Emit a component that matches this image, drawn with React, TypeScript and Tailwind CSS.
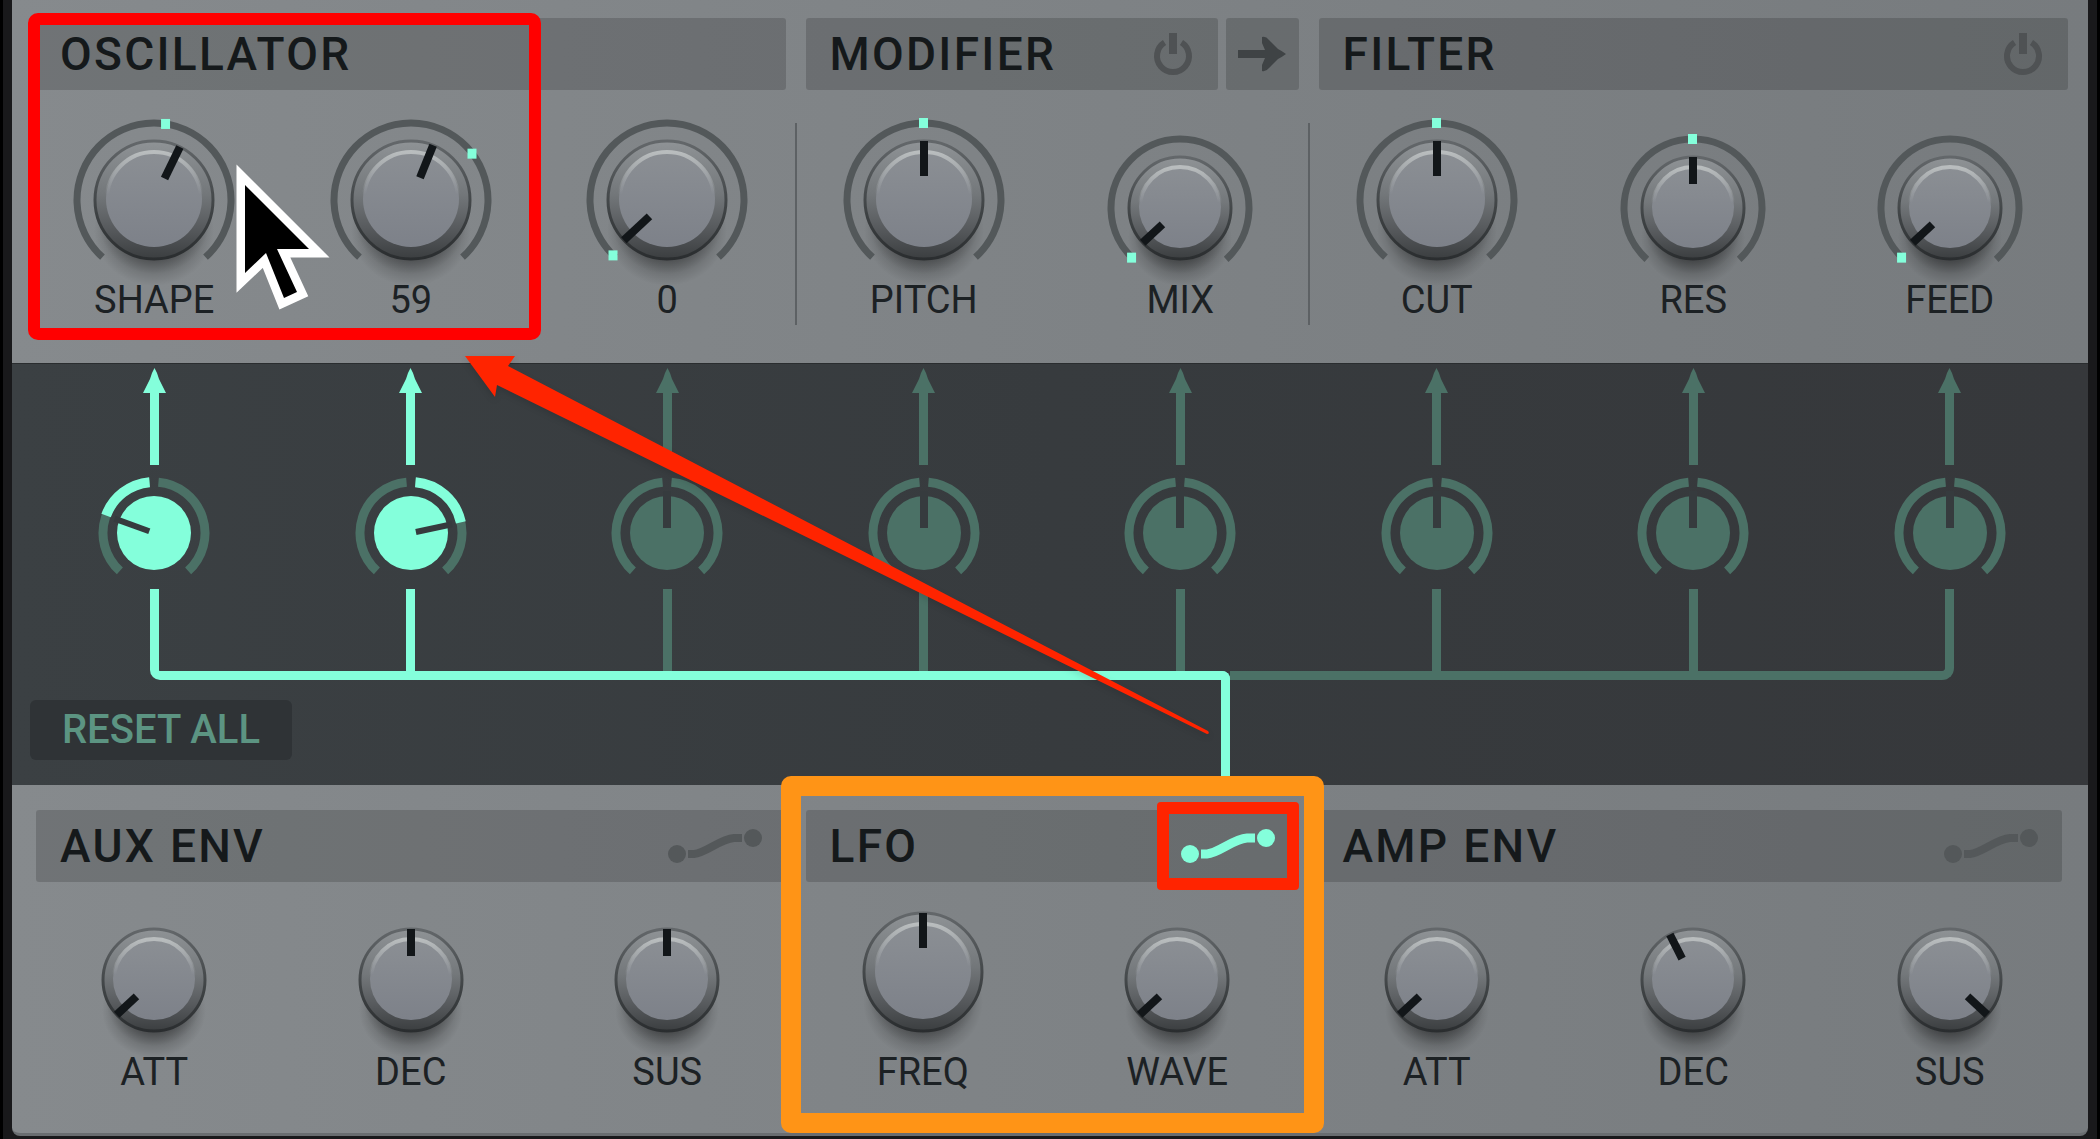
import { useState } from "react";
import type { ReactNode } from "react";
import clsx from "clsx";

const oscillatorKnobs = [
  { id: "osc-shape", label: "SHAPE", angle: 26, marker: 9, size: "lg" },
  { id: "osc-param", label: "59", angle: 22, marker: 53, size: "lg" },
  { id: "osc-mod", label: "0", angle: -133, marker: -136, size: "lg" },
];

const modifierKnobs = [
  { id: "mod-pitch", label: "PITCH", angle: 0, marker: 0, size: "lg" },
  { id: "mod-mix", label: "MIX", angle: -133, marker: -136, size: "sm" },
];

const filterKnobs = [
  { id: "filter-cut", label: "CUT", angle: 0, marker: 0, size: "lg" },
  { id: "filter-res", label: "RES", angle: 0, marker: 0, size: "sm" },
  { id: "filter-feed", label: "FEED", angle: -133, marker: -136, size: "sm" },
];

const auxKnobs = [
  { id: "aux-att", label: "ATT", angle: -133, size: "sm" },
  { id: "aux-dec", label: "DEC", angle: 0, size: "sm" },
  { id: "aux-sus", label: "SUS", angle: 0, size: "sm" },
];

const lfoKnobs = [
  { id: "lfo-freq", label: "FREQ", angle: 0, size: "lg" },
  { id: "lfo-wave", label: "WAVE", angle: -133, size: "sm" },
];

const ampKnobs = [
  { id: "amp-att", label: "ATT", angle: -133, size: "sm" },
  { id: "amp-dec", label: "DEC", angle: -27, size: "sm" },
  { id: "amp-sus", label: "SUS", angle: 133, size: "sm" },
];

const initialRoutes = [
  { name: "Shape amount", angle: -70 },
  { name: "Param amount", angle: 78 },
  { name: "Osc mod amount", angle: 0 },
  { name: "Pitch amount", angle: 0 },
  { name: "Mix amount", angle: 0 },
  { name: "Cutoff amount", angle: 0 },
  { name: "Resonance amount", angle: 0 },
  { name: "Feedback amount", angle: 0 },
];

type KnobData = { id: string; label: string; angle: number; marker?: number; size: string };

// angle is measured clockwise from twelve o'clock
const point = (cx: number, cy: number, r: number, angle: number) => {
  const rad = (angle * Math.PI) / 180;
  return { x: cx + r * Math.sin(rad), y: cy - r * Math.cos(rad) };
};

const arc = (cx: number, cy: number, r: number, from: number, to: number) => {
  const a = point(cx, cy, r, from);
  const b = point(cx, cy, r, to);
  return `M${a.x} ${a.y} A${r} ${r} 0 ${to - from > 180 ? 1 : 0} 1 ${b.x} ${b.y}`;
};

const Knob = ({ id, label, angle, marker, size }: KnobData) => {
  const [value, setValue] = useState(angle);
  const big = size === "lg";
  const cy = big ? 88 : 96;
  const r = big ? 60 : 52;
  const face = big ? 48 : 41;
  const ring = big ? 77 : 69;
  const dot = marker === undefined ? null : point(88, cy, ring, marker + value - angle);

  return (
    <div className="flex flex-col items-center">
      <div className="relative h-[168px] w-[176px]">
        <svg viewBox="0 0 176 168" className="h-full w-full overflow-visible" aria-hidden="true">
          <ellipse cx="88" cy={cy + 20} rx={r - 4} ry={r - 6} fill="url(#knobShadow)" />
          <ellipse cx="88" cy={cy + 30} rx={r} ry={r - 4} fill="url(#knobShadow)" />
          {dot && <path d={arc(88, cy, ring, -138, 138)} fill="none" stroke="#53585a" strokeWidth="7" />}
          <circle cx="88" cy={cy} r={r - 1} fill="url(#knobRim)" stroke="url(#knobEdge)" strokeWidth="3" />
          <circle cx="88" cy={cy - 1} r={face} fill="url(#knobFace)" />
          <circle cx="88" cy={cy - 1} r={face - 1} fill="none" stroke="url(#knobShine)" strokeWidth="4" />
          <rect
            x="84"
            y={cy - r + 1}
            width="8"
            height={r - 25}
            fill="#121619"
            transform={`rotate(${value} 88 ${cy})`}
          />
          {dot && <rect x={dot.x - 5} y={dot.y - 5} width="9" height="10" fill="#84ffdb" />}
        </svg>
        <input
          id={id}
          type="range"
          min={-138}
          max={138}
          value={value}
          onChange={(e) => setValue(Number(e.target.value))}
          className="absolute inset-0 h-full w-full cursor-pointer opacity-0"
        />
      </div>
      <label htmlFor={id} className="text-[38px] leading-10 text-[#1c2124]">
        {label}
      </label>
    </div>
  );
};

const KnobRow = ({ knobs, className }: { knobs: KnobData[]; className?: string }) => (
  <div className={clsx("grid", knobs.length === 3 ? "grid-cols-3" : "grid-cols-2", className)}>
    {knobs.map((knob) => (
      <Knob key={knob.id} {...knob} />
    ))}
  </div>
);

const HeaderBar = ({ title, children }: { title: string; children?: ReactNode }) => (
  <div className="flex h-[72px] flex-1 items-center justify-between rounded-[3px] bg-black/16 px-6">
    <h2 className="text-[46px] leading-none font-medium tracking-wider text-[#15191b]">{title}</h2>
    {children}
  </div>
);

const PowerButton = ({ label }: { label: string }) => (
  <button type="button" aria-label={label} className="text-[#4f5254]">
    <svg width="42" height="42" viewBox="0 0 42 42" fill="none" stroke="currentColor" className="block">
      <path d={arc(21, 23, 16, 32, 328)} strokeWidth="6" />
      <path d="M21 0V21" strokeWidth="8" />
    </svg>
  </button>
);

const EnvelopeButton = ({ label, active }: { label: string; active?: boolean }) => (
  <button
    type="button"
    aria-label={label}
    aria-pressed={!!active}
    className={active ? "text-[#84ffdb]" : "text-[#54585a]"}
  >
    <svg width="94" height="34" viewBox="0 0 94 34" className="block">
      <circle cx="9" cy="25" r="9" fill="currentColor" />
      <circle cx="85" cy="9" r="9" fill="currentColor" />
      <path d="M20 25H26C38 24 52 10 66 9H74" fill="none" stroke="currentColor" strokeWidth={active ? 9 : 8} />
    </svg>
  </button>
);

const Route = ({ name, angle, corner }: { name: string; angle: number; corner: boolean }) => {
  const [value, setValue] = useState(angle);
  const lit = value !== 0;
  const color = lit ? "#84ffdb" : "#4b7166";

  return (
    <div className="flex flex-col items-center">
      <svg width="25" height="97" viewBox="0 0 25 97" fill={color} className="block" aria-hidden="true">
        <path d="M12.500 0 Q15 4 17 11 L24 25 H17 V97 H8 V25 H1 L8 11 Q10 4 12.500 0Z" />
      </svg>
      <div className="relative mt-1 h-[120px] w-[120px]">
        <svg viewBox="0 0 120 120" className="h-full w-full" aria-hidden="true">
          <path d={arc(60, 64, 51, -138, -5)} fill="none" stroke="#4b7166" strokeWidth="9" />
          <path d={arc(60, 64, 51, 5, 138)} fill="none" stroke="#4b7166" strokeWidth="9" />
          {lit && (
            <path
              d={value > 0 ? arc(60, 64, 51, 5, value) : arc(60, 64, 51, value, -5)}
              fill="none"
              stroke={color}
              strokeWidth="10"
            />
          )}
          <circle cx="60" cy="64" r="37" fill={color} />
          <rect
            x={lit ? 57 : 56}
            y="22"
            width={lit ? 6 : 8}
            height="37"
            fill="#363b3e"
            transform={`rotate(${value} 60 64)`}
          />
        </svg>
        <input
          type="range"
          aria-label={name}
          min={-138}
          max={138}
          value={value}
          onChange={(e) => setValue(Number(e.target.value))}
          className="absolute inset-0 h-full w-full cursor-pointer opacity-0"
        />
      </div>
      <div className={clsx("w-[9px]", corner ? "h-[75px]" : "h-[83px]", lit ? "bg-[#84ffdb]" : "bg-[#4b7166]")} />
    </div>
  );
};

const Cursor = () => (
  <svg
    width="100"
    height="160"
    viewBox="230 160 100 160"
    className="pointer-events-none absolute top-[158px] left-[26.5%] overflow-visible"
    aria-hidden="true"
  >
    <path
      d="M245 187V275L266 255L284 300L297 294L277 251H309Z"
      fill="#000"
      stroke="#fff"
      strokeWidth="17"
      strokeMiterlimit="8"
      paintOrder="stroke"
    />
  </svg>
);

const ArrowCallout = () => (
  <svg
    width="750"
    height="384"
    viewBox="0 0 750 384"
    className="pointer-events-none absolute -top-2 left-[21.8%] overflow-visible drop-shadow-md"
    aria-hidden="true"
  >
    <path d="M0 0H50L43 10L743 375Q745 378 742 378L32 29L30 41Z" fill="#ff2400" />
  </svg>
);

// Shared paint for every knob
const KnobPaint = () => (
  <svg className="absolute h-0 w-0" aria-hidden="true">
    <defs>
      <linearGradient id="knobRim" x1="0" y1="0" x2="0" y2="1">
        <stop offset="0" stopColor="#8f9396" />
        <stop offset="0.450" stopColor="#73777a" />
        <stop offset="0.750" stopColor="#56595c" />
        <stop offset="1" stopColor="#3b3e40" />
      </linearGradient>
      <linearGradient id="knobEdge" x1="0" y1="0" x2="0" y2="1">
        <stop offset="0" stopColor="#63676a" />
        <stop offset="0.500" stopColor="#44484a" />
        <stop offset="1" stopColor="#2a2d2f" />
      </linearGradient>
      <linearGradient id="knobFace" x1="0" y1="0" x2="0" y2="1">
        <stop offset="0" stopColor="#8b8f94" />
        <stop offset="1" stopColor="#7d8189" />
      </linearGradient>
      <linearGradient id="knobShine" x1="0" y1="0" x2="0" y2="1">
        <stop offset="0" stopColor="#b9bdbe" />
        <stop offset="0.450" stopColor="#b9bdbe" stopOpacity="0" />
      </linearGradient>
      <radialGradient id="knobShadow">
        <stop offset="0.500" stopColor="#000" stopOpacity="0.300" />
        <stop offset="1" stopColor="#000" stopOpacity="0" />
      </radialGradient>
    </defs>
  </svg>
);

export default function App() {
  return (
    <main className="min-h-screen overflow-hidden border-x-3 border-black bg-[#19191b] pr-[9px] pl-[9px] font-[Roboto,'Liberation_Sans',sans-serif]">
      <KnobPaint />

      <div className="grid grid-cols-8 bg-linear-to-r from-[#868a8d] to-[#777b7e] pt-[18px] pr-2.5 pb-[43px] pl-3.5">
        <section className="relative col-span-3">
          <div className="mx-2.5 flex">
            <HeaderBar title="OSCILLATOR" />
          </div>
          <KnobRow knobs={oscillatorKnobs} className="mt-[22px]" />
          <div className="pointer-events-none absolute -top-[5px] left-0.5 h-[327px] w-2/3 rounded-[10px] border-12 border-[#ff0000]" />
          <div className="pointer-events-none absolute inset-x-0 -top-[18px]">
            <Cursor />
          </div>
        </section>

        <section className="relative col-span-2">
          <div className="mx-2.5 flex gap-2">
            <HeaderBar title="MODIFIER">
              <PowerButton label="Modifier on" />
            </HeaderBar>
            <button
              type="button"
              aria-label="Next modifier"
              className="flex w-[73px] items-center justify-center rounded-[3px] bg-black/16 text-[#3f4345]"
            >
              <svg width="48" height="36" viewBox="0 0 48 36" fill="currentColor">
                <path d="M0 14H27L24 7V1Q28 0 31 4L40 13Q44 15 48 18Q44 21 40 23L31 32Q28 36 24 35V29L27 22H0Z" />
              </svg>
            </button>
          </div>
          <KnobRow knobs={modifierKnobs} className="mt-[22px]" />
          <div className="absolute top-[105px] -left-px h-[202px] w-0.5 bg-[#5d6164]" />
          <div className="absolute top-[105px] -right-px h-[202px] w-0.5 bg-[#5d6164]" />
        </section>

        <section className="col-span-3">
          <div className="mx-2.5 flex">
            <HeaderBar title="FILTER">
              <PowerButton label="Filter on" />
            </HeaderBar>
          </div>
          <KnobRow knobs={filterKnobs} className="mt-[22px]" />
        </section>
      </div>

      <section className="relative border-t border-[#2a2d2f] bg-linear-to-r from-[#3b4043] via-[#373b3e] to-[#36383b] pt-1 pr-2.5 pl-3.5">
        <div className="grid grid-cols-8">
          {initialRoutes.map((route, i) => (
            <Route key={route.name} {...route} corner={i === 0 || i === initialRoutes.length - 1} />
          ))}
        </div>
        {/* bus that carries the LFO to every destination */}
        <div className="-mt-[10px] flex items-start">
          <div className="w-[57%]">
            <div className="ml-[calc(10.965%-4px)] h-[18px] rounded-bl-[10px] border-b-9 border-l-9 border-[#84ffdb]" />
            <button
              type="button"
              className="mt-5 ml-1 h-[60px] w-[262px] rounded-md bg-[#2f3336] text-[40px] leading-none font-medium text-[#5c9482]"
            >
              RESET ALL
            </button>
          </div>
          <div className="mt-[9px] h-[114px] w-[34px] rounded-tr-lg border-t-9 border-r-9 border-[#84ffdb]" />
          <div className="mr-[calc(6.25%-4px)] h-[18px] flex-1 rounded-br-[12px] border-r-9 border-b-9 border-[#4b7166]" />
        </div>
        <ArrowCallout />
      </section>

      <div className="grid grid-cols-8 rounded-b-lg border-b-3 border-[#696d70] bg-linear-to-r from-[#868a8d] to-[#777b7e] pt-[25px] pr-2.5 pb-[41px] pl-3.5">
        <section className="col-span-3">
          <div className="mx-2.5 flex">
            <HeaderBar title="AUX ENV">
              <EnvelopeButton label="Route aux envelope" />
            </HeaderBar>
          </div>
          <KnobRow knobs={auxKnobs} className="mt-0.5" />
        </section>

        <section className="relative col-span-2">
          <div className="mx-2.5 flex">
            <HeaderBar title="LFO">
              <div className="relative flex">
                <EnvelopeButton label="Route LFO" active />
                <div className="pointer-events-none absolute -inset-x-6 -inset-y-[27px] rounded border-12 border-[#ff2400]" />
              </div>
            </HeaderBar>
          </div>
          <KnobRow knobs={lfoKnobs} className="mt-0.5 pr-1" />
          <div className="pointer-events-none absolute -inset-x-[15px] -top-[34px] h-[357px] rounded-[10px] border-20 border-[#ff9416]" />
        </section>

        <section className="col-span-3">
          <div className="mr-4 ml-2.5 flex">
            <HeaderBar title="AMP ENV">
              <EnvelopeButton label="Route amp envelope" />
            </HeaderBar>
          </div>
          <KnobRow knobs={ampKnobs} className="mt-0.5" />
        </section>
      </div>
    </main>
  );
}
